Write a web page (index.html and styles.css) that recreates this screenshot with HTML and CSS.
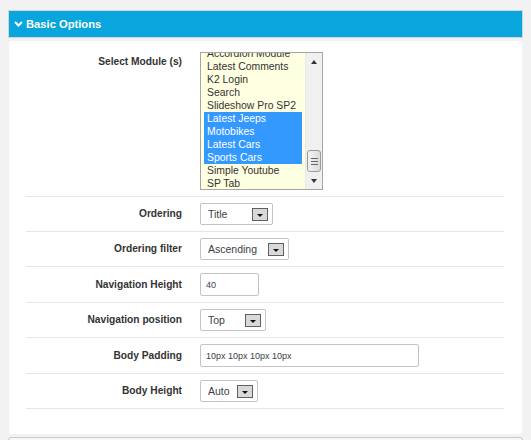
FILE: index.html
```html
<!DOCTYPE html>
<html lang="en">

<head>
    <meta charset="UTF-8" />
    <title>Basic Options</title>
    <link rel="stylesheet" href="styles.css">
</head>

<body>

    <div class="options">
        <div class="panel-heading">
            <svg class="chevron" width="9" height="6" viewBox="0 0 9 6" aria-hidden="true">
                <path d="M1 1 L4.5 4.5 L8 1" fill="none" stroke="#fff" stroke-width="2" />
            </svg>
            Basic Options
        </div>

        <div class="panel-body">

            <!-- module list -->
            <div class="form-row form-row-top">
                <label class="form-label">Select Module (s)</label>
                <div class="listbox">
                    <ul class="listbox-items">
                        <li>Accordion Module</li>
                        <li>Latest Comments</li>
                        <li>K2 Login</li>
                        <li>Search</li>
                        <li>Slideshow Pro SP2</li>
                        <li class="selected">Latest Jeeps</li>
                        <li class="selected">Motobikes</li>
                        <li class="selected">Latest Cars</li>
                        <li class="selected">Sports Cars</li>
                        <li>Simple Youtube</li>
                        <li>SP Tab</li>
                    </ul>
                    <div class="scrollbar">
                        <span class="scroll-arrow up"></span>
                        <span class="scroll-track">
                            <span class="scroll-thumb"><i></i><i></i><i></i></span>
                        </span>
                        <span class="scroll-arrow down"></span>
                    </div>
                </div>
            </div>

            <div class="form-row">
                <label class="form-label">Ordering</label>
                <div class="select select-title"><span>Title</span><span class="select-btn"></span></div>
            </div>

            <div class="form-row">
                <label class="form-label">Ordering filter</label>
                <div class="select select-filter"><span>Ascending</span><span class="select-btn"></span></div>
            </div>

            <div class="form-row">
                <label class="form-label">Navigation Height</label>
                <input type="text" class="text-field field-short" value="40" />
            </div>

            <div class="form-row">
                <label class="form-label">Navigation position</label>
                <div class="select select-position"><span>Top</span><span class="select-btn"></span></div>
            </div>

            <div class="form-row">
                <label class="form-label">Body Padding</label>
                <input type="text" class="text-field field-long" value="10px 10px 10px 10px" />
            </div>

            <div class="form-row">
                <label class="form-label">Body Height</label>
                <div class="select select-height"><span>Auto</span><span class="select-btn"></span></div>
            </div>

        </div>

        <div class="next-panel"></div>
    </div>

</body>

</html>
```

FILE: styles.css
```css
* {
    box-sizing: border-box;
}

body {
    margin: 0;
    padding: 10px 8px 0 8px;
    background: #f2f2f2;
    font-family: "Liberation Sans", Arial, sans-serif;
    overflow: hidden;
}

.panel-heading {
    display: flex;
    align-items: center;
    gap: 3px;
    height: 28px;
    padding-left: 5px;
    border: 1px solid #cfd6da;
    background-color: #08a6dc;
    color: #fff;
    font-size: 11.2px;
    font-weight: bold;
}

.chevron {
    display: block;
}

.panel-body {
    margin: 3px 1px 0;
    padding: 5px 18px 25px 17px;
    background: #fff;
    border-radius: 3px;
}

.form-row {
    display: grid;
    grid-template-columns: 156px auto;
    column-gap: 18px;
    align-items: center;
    justify-items: start;
    padding: 6px 0;
    border-bottom: 1px solid #e6e6e6;
}

.form-row-top {
    align-items: start;
}

.form-label {
    justify-self: end;
    color: #333;
    font-size: 10.2px;
    font-weight: bold;
    line-height: 14px;
}

.form-row-top .form-label {
    padding-top: 3px;
}

/* list box */
.listbox {
    display: flex;
    width: 123px;
    height: 138px;
    border: 1px solid #a5a5a5;
    background: #ffffe1;
    overflow: hidden;
}

.listbox-items {
    flex: 1;
    margin: -6px 0 0;
    padding: 0 3px;
    list-style: none;
    font-size: 10.4px;
    color: #333;
}

.listbox-items li {
    height: 13px;
    line-height: 13px;
    padding-left: 3px;
    white-space: nowrap;
}

.listbox-items li.selected {
    background: #3399ff;
    color: #fff;
}

.scrollbar {
    display: flex;
    flex-direction: column;
    width: 17px;
    background: #f0f0f0;
    border-left: 1px solid #e8e8e8;
}

.scroll-arrow {
    height: 17px;
    display: flex;
    align-items: center;
    justify-content: center;
}

.scroll-arrow::after {
    content: "";
    border-left: 3.5px solid transparent;
    border-right: 3.5px solid transparent;
}

.scroll-arrow.up::after {
    border-bottom: 4px solid #333;
}

.scroll-arrow.down::after {
    border-top: 4px solid #333;
}

.scroll-track {
    flex: 1;
    display: flex;
    flex-direction: column;
    justify-content: flex-end;
}

.scroll-thumb {
    display: flex;
    flex-direction: column;
    align-items: center;
    justify-content: center;
    gap: 2px;
    height: 22px;
    margin: 0 1px;
    border: 1px solid #9a9a9a;
    border-radius: 3px;
    background: linear-gradient(to right, #f2f2f2, #dcdcdc);
}

.scroll-thumb i {
    display: block;
    width: 7px;
    height: 1px;
    background: #666;
}

/* drop-down selects */
.select {
    display: flex;
    align-items: center;
    justify-content: space-between;
    height: 22px;
    padding: 0 4px 0 7px;
    border: 1px solid #c3c3c3;
    border-radius: 2px;
    background: #fff;
    color: #3d3d4a;
    font-size: 10.5px;
}

.select-title {
    width: 73px;
}

.select-filter {
    width: 89px;
}

.select-position {
    width: 66px;
}

.select-height {
    width: 58px;
}

.select-btn {
    display: flex;
    align-items: center;
    justify-content: center;
    width: 16px;
    height: 13px;
    border: 1px solid #606060;
    background: #d9d9d9;
}

.select-btn::after {
    content: "";
    margin-top: 3px;
    border-left: 3px solid transparent;
    border-right: 3px solid transparent;
    border-top: 3px solid #111;
}

/* text inputs */
.text-field {
    height: 23px;
    margin: 0;
    padding: 0 5px;
    border: 1px solid #c3c3c3;
    border-radius: 2px;
    background: #fff;
    color: #3d3d4a;
    font-family: "Liberation Sans", Arial, sans-serif;
    font-size: 9px;
    outline: none;
}

.field-short {
    width: 59px;
}

.field-long {
    width: 219px;
}

.next-panel {
    height: 20px;
    margin-top: 3px;
    border: 1px solid #c8c8c8;
    border-radius: 3px;
    background: #f7f7f7;
}
```
